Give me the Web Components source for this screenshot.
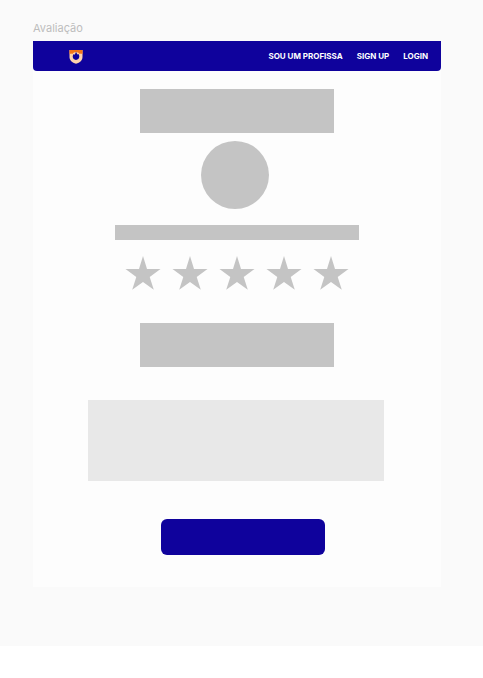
<!DOCTYPE html>
<html lang="pt-BR">
<head>
<meta charset="utf-8">
<meta name="viewport" content="width=device-width, initial-scale=1">
<title>Avaliação</title>
<style>
html { background: #fff; }
body { margin: 0; font-family: Inter, "Liberation Sans", sans-serif; }
</style>
</head>
<body>
<review-board></review-board>
<script>
const define = (name, html) => {
  const template = document.createElement('template');
  template.innerHTML = html;
  customElements.define(name, class extends HTMLElement {
    constructor() {
      super();
      this.attachShadow({ mode: 'open' }).append(template.content.cloneNode(true));
    }
  });
};

define('site-logo', `
<style>
:host { display: block; width: 14px; height: 15px; }
svg { display: block; width: 100%; height: 100%; }
</style>
<svg viewBox="0 0 14 15" aria-hidden="true">
  <path d="M.5 1H13.500V8C13.500 11.300 11 13.500 7 14.800C3 13.500 .5 11.300 .5 8Z" fill="#ffd3ad"/>
  <path d="M.5 1H13.500V5.200L12 4.500L10.800 4.900L9 3.500L7 3L5 3.500L3.200 4.900L2 4.500L.5 5.200Z" fill="#f5761a"/>
  <path d="M7 2.600C7.300 4.300 8.200 4.700 8.600 5.600L9.500 4.900C10.100 5.800 10.300 6.600 10.300 7.600C10.300 9.600 8.900 10.900 7 10.900S3.700 9.600 3.700 7.600C3.700 6.600 4.100 5.700 4.700 5L5.500 5.700C6.300 4.800 6.800 4 7 2.600Z" fill="#0f029c"/>
</svg>`);

define('nav-link', `
<style>
:host { display: block; }
a { color: #fff; text-decoration: none; font-size: 8px; line-height: 12px; font-weight: 700; white-space: nowrap; display: block; }
</style>
<a href="#"><slot></slot></a>`);

define('site-header', `
<style>
:host { display: block; background: #0f029c; border-radius: 0 0 4px 4px; }
nav { display: flex; align-items: center; height: 30px; padding: 0 13px 0 36px; }
site-logo { margin-right: auto; }
.links { display: flex; gap: 14px; }
</style>
<nav><site-logo></site-logo><div class="links"><slot></slot></div></nav>`);

define('block-shape', `
<style>
:host { display: block; background: #c4c4c4; }
</style>`);

define('star-rating', `
<style>
:host { display: block; }
fieldset { display: flex; justify-content: center; gap: 11px; border: 0; margin: 0; padding: 0; min-width: 0; }
label { display: grid; width: 36px; height: 34px; cursor: pointer; }
label > * { grid-area: 1 / 1; width: 100%; height: 100%; margin: 0; }
input { opacity: 0; cursor: pointer; }
svg { fill: #c4c4c4; pointer-events: none; }
</style>
<fieldset aria-label="Nota">
${[1, 2, 3, 4, 5].map(n => `<label><input type="radio" name="rating" value="${n}" aria-label="${n}"><svg viewBox="0 0 36 34" aria-hidden="true"><path d="M18 0L22 13H35.500L24.700 21L28.800 33.800L18 26L7.200 33.800L11.300 21L.5 13H14Z"/></svg></label>`).join('')}
</fieldset>`);

define('comment-box', `
<style>
:host { display: block; }
textarea { display: block; box-sizing: border-box; width: 100%; height: 81px; margin: 0; padding: 8px; border: 0; border-radius: 0; resize: none; background: #e8e8e8; font: inherit; font-size: 11px; }
</style>
<textarea aria-label="Comentário"></textarea>`);

define('submit-button', `
<style>
:host { display: block; }
button { display: block; width: 100%; height: 36px; border: 0; padding: 0; border-radius: 6px; background: #0f029c; cursor: pointer; }
</style>
<button type="button" aria-label="Enviar"></button>`);

define('review-form', `
<style>
:host { display: block; padding: 18px 0 32px; }
.title, .subject { height: 44px; margin: 0 107px; }
.avatar { aspect-ratio: 1; border-radius: 50%; margin: 8px 172px 16px 168px; }
.name { height: 15px; margin: 0 82px 16px; }
.subject { margin-top: 33px; }
comment-box { margin: 33px 57px 38px 55px; }
submit-button { margin: 0 116px 0 128px; }
</style>
<block-shape class="title"></block-shape>
<block-shape class="avatar"></block-shape>
<block-shape class="name"></block-shape>
<star-rating></star-rating>
<block-shape class="subject"></block-shape>
<comment-box></comment-box>
<submit-button></submit-button>`);

define('review-board', `
<style>
:host { display: block; background: #fafafa; padding: 21px 42px 59px 33px; }
h1 { margin: 0; padding-bottom: 6px; font-size: 11px; line-height: 14px; font-weight: 400; color: #bdbdbd; }
main { background: #fdfdfd; }
</style>
<h1>Avaliação</h1>
<main>
  <site-header>
    <nav-link>SOU UM PROFISSA</nav-link>
    <nav-link>SIGN UP</nav-link>
    <nav-link>LOGIN</nav-link>
  </site-header>
  <review-form></review-form>
</main>`);
</script>
</body>
</html>
